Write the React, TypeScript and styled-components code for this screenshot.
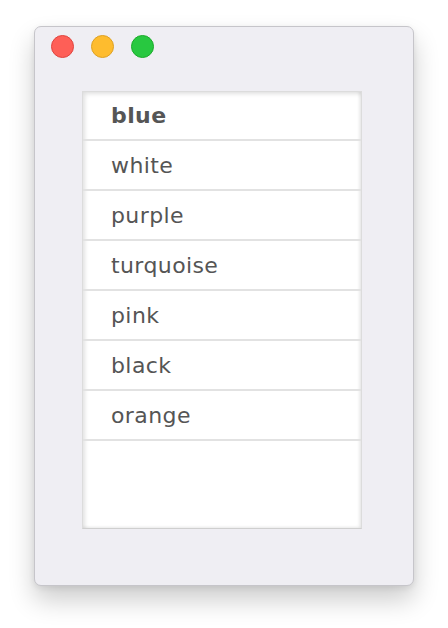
import React from "react";
import styled, { createGlobalStyle } from "styled-components";

const GlobalStyle = createGlobalStyle`
  html, body {
    margin: 0;
    padding: 0;
    background: #ffffff;
  }
`;

const Page = styled.div`
  padding: 26px 0 42px 34px;
`;

const Window = styled.div`
  width: 380px;
  height: 560px;
  box-sizing: border-box;
  background: #efeef3;
  border: 1px solid #c6c5ca;
  border-radius: 7px;
  box-shadow: 0 14px 26px rgba(0, 0, 0, 0.2), 0 2px 6px rgba(0, 0, 0, 0.08);
  display: flex;
  flex-direction: column;
`;

const TitleBar = styled.div`
  display: flex;
  gap: 17px;
  padding: 8px 0 0 16px;
  height: 38px;
  box-sizing: border-box;
`;

const Light = styled.span<{ $fill: string; $edge: string }>`
  width: 23px;
  height: 23px;
  border-radius: 50%;
  box-sizing: border-box;
  background: ${(p) => p.$fill};
  border: 1px solid ${(p) => p.$edge};
`;

const ListBox = styled.div`
  margin: 26px 0 0 47px;
  width: 280px;
  height: 438px;
  box-sizing: border-box;
  background: #ffffff;
  border: 1px solid #dcdcdc;
  border-bottom-color: #cfcfcf;
  box-shadow: inset 2px 2px 4px rgba(0, 0, 0, 0.12), inset -2px -1px 3px rgba(0, 0, 0, 0.08);
  display: flex;
  flex-direction: column;
`;

const Row = styled.div<{ $bold?: boolean }>`
  height: 50px;
  box-sizing: border-box;
  border-bottom: 2px solid #e2e2e2;
  display: flex;
  align-items: center;
  padding-left: 28px;
  font-family: "DejaVu Sans", Verdana, sans-serif;
  font-size: 22px;
  letter-spacing: 0.4px;
  font-weight: ${(p) => (p.$bold ? 700 : 400)};
  color: #555555;
  &:first-child {
    height: 49px;
  }
`;

const colours = ["blue", "white", "purple", "turquoise", "pink", "black", "orange"];

export default function App() {
  return (
    <>
      <GlobalStyle />
      <Page>
        <Window>
          <TitleBar>
            <Light $fill="#fe5f57" $edge="#e0443e" />
            <Light $fill="#febc2e" $edge="#dea123" />
            <Light $fill="#28c840" $edge="#1aab29" />
          </TitleBar>
          <ListBox>
            {colours.map((name, index) => (
              <Row key={name} $bold={index === 0}>
                {name}
              </Row>
            ))}
          </ListBox>
        </Window>
      </Page>
    </>
  );
}
